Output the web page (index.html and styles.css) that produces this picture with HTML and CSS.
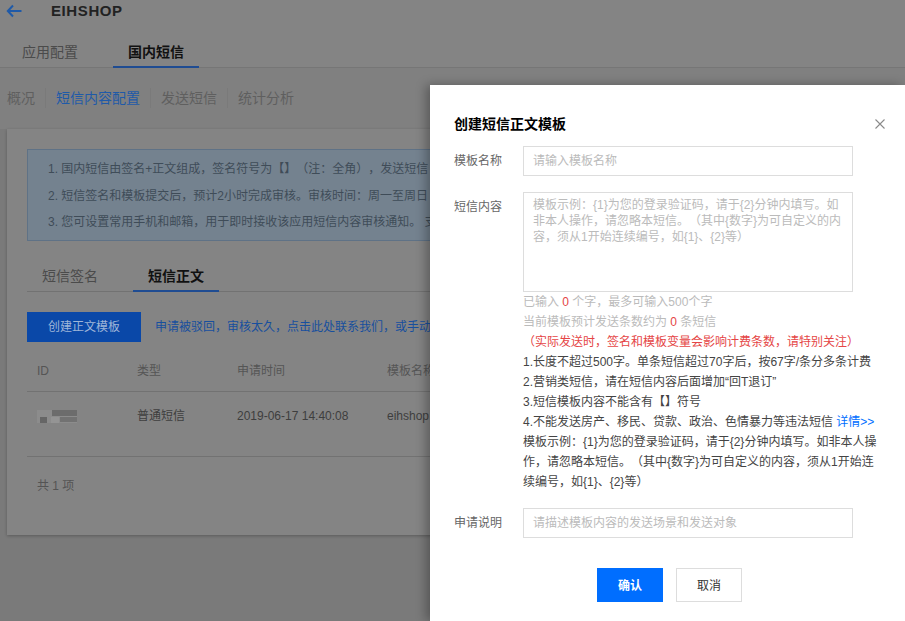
FILE: index.html
```html
<!DOCTYPE html>
<html lang="zh-CN">
<head>
<meta charset="utf-8">
<title>创建短信正文模板</title>
<link rel="stylesheet" href="styles.css">
</head>
<body>
<div class="page">
  <header class="top">
    <svg class="back" width="16" height="14" viewBox="0 0 16 14"><path d="M7 1.500 1.800 7 7 12.500M2 7h13.500" fill="none" stroke="#1f5aa8" stroke-width="2"/></svg>
    <span class="app">EIHSHOP</span>
  </header>
  <nav class="tabs main-tabs">
    <span class="tab">应用配置</span>
    <span class="tab on">国内短信</span>
  </nav>
  <nav class="sub">
    <span class="sub-item first">概况</span>
    <span class="sub-item active">短信内容配置</span>
    <span class="sub-item">发送短信</span>
    <span class="sub-item">统计分析</span>
  </nav>
  <section class="card">
    <div class="notice">
      <p>1. 国内短信由签名+正文组成，签名符号为【】（注：全角），发送短信</p>
      <p>2. 短信签名和模板提交后，预计2小时完成审核。审核时间：周一至周日</p>
      <p>3. 您可设置常用手机和邮箱，用于即时接收该应用短信内容审核通知。 支</p>
    </div>
    <nav class="tabs inner-tabs">
      <span class="tab">短信签名</span>
      <span class="tab on">短信正文</span>
    </nav>
    <div class="tools">
      <span class="create">创建正文模板</span>
      <span class="apply">申请被驳回，审核太久，点击此处联系我们，或手动</span>
    </div>
    <div class="table">
      <div class="row head"><span>ID</span><span>类型</span><span>申请时间</span><span>模板名称</span></div>
      <div class="row body"><span class="mask"></span><span>普通短信</span><span>2019-06-17 14:40:08</span><span>eihshop</span></div>
    </div>
    <div class="total">共 1 项</div>
  </section>
</div>
<aside class="modal">
  <div class="modal-head">
    <h2>创建短信正文模板</h2>
    <svg class="close" width="10" height="10" viewBox="0 0 10 10"><path d="M.5.5l9 9M9.500.5l-9 9" fill="none" stroke="#8a8a8a" stroke-width="1.1"/></svg>
  </div>
  <div class="form">
    <label class="lab">模板名称</label>
    <div class="field ph">请输入模板名称</div>
    <label class="lab">短信内容</label>
    <div class="content">
      <div class="field area ph">模板示例：{1}为您的登录验证码，请于{2}分钟内填写。如非本人操作，请忽略本短信。（其中{数字}为可自定义的内容，须从1开始连续编号，如{1}、{2}等）</div>
      <div class="help">
        <p class="mute">已输入 <b>0</b> 个字，最多可输入500个字</p>
        <p class="mute">当前模板预计发送条数约为 <b>0</b> 条短信</p>
        <p class="warn">（实际发送时，签名和模板变量会影响计费条数，请特别关注）</p>
        <p>1.长度不超过500字。单条短信超过70字后，按67字/条分多条计费</p>
        <p>2.营销类短信，请在短信内容后面增加“回T退订”</p>
        <p>3.短信模板内容不能含有【】符号</p>
        <p>4.不能发送房产、移民、贷款、政治、色情暴力等违法短信 <a>详情&gt;&gt;</a></p>
        <p>模板示例：{1}为您的登录验证码，请于{2}分钟内填写。如非本人操作，请忽略本短信。（其中{数字}为可自定义的内容，须从1开始连续编号，如{1}、{2}等）</p>
      </div>
    </div>
    <label class="lab">申请说明</label>
    <div class="field ph">请描述模板内容的发送场景和发送对象</div>
  </div>
  <div class="actions">
    <span class="btn ok">确认</span>
    <span class="btn no">取消</span>
  </div>
</aside>
</body>
</html>
```
FILE: styles.css
```css
* { box-sizing: border-box; }
html, body { margin: 0; height: 100%; }
body {
  width: 905px;
  height: 621px;
  overflow: hidden;
  position: relative;
  font: 12px/20px "Liberation Sans", "Noto Sans CJK SC", sans-serif;
  text-spacing-trim: space-all;
  background: #7a7a7a;
  color: #4a4a4a;
}
p { margin: 0; }
.page { height: 621px; overflow: hidden; }
.top { height: 22px; display: flex; align-items: center; padding-left: 6px; background: #848484; }
.back { display: block; }
.app { margin-left: 29px; font-size: 15px; font-weight: 700; letter-spacing: .6px; color: #222; }
.tabs { display: flex; gap: 20px; border-bottom: 1px solid #777; }
.tab { padding: 0 15px; height: 34px; line-height: 36px; font-size: 14px; color: #4b4b4b; border-bottom: 2px solid transparent; margin-bottom: -1px; }
.tab.on { color: #111; font-weight: 700; border-bottom-color: #1f4c92; }
.main-tabs { height: 46px; padding: 12px 0 0 7px; background: #848484; border-bottom-color: #767676; }
.sub { display: flex; align-items: flex-start; padding: 20px 0 0 7px; height: 61px; background: #808080; }
.sub-item { font-size: 14px; color: #5f5f5f; padding: 0 10px; border-left: 1px solid #7a7a7a; line-height: 20px; }
.sub-item.first { padding-left: 0; border-left: 0; }
.sub-item.active { color: #1f5aa8; }
.card { margin: 0 0 0 7px; padding: 20px; height: 406px; width: 900px; background: #848484; box-shadow: 0 1px 3px rgba(0,0,0,.25); overflow: hidden; white-space: nowrap; }
.notice { height: 92px; padding: 6px 20px; background: #74828f; border: 1px solid #5f7286; color: #3f4c58; line-height: 26.5px; }
.inner-tabs { height: 39px; margin-top: 12px; border-bottom-color: #727272; }
.inner-tabs .tab { height: 39px; line-height: 46px; }
.tools { display: flex; align-items: center; gap: 14px; margin-top: 20px; height: 30px; }
.create { width: 114px; height: 30px; line-height: 30px; text-align: center; background: #0a48a8; color: #9fb6d8; }
.apply { color: #174f9e; }
.row { display: grid; grid-template-columns: 100px 100px 150px 1fr; padding-left: 10px; border-bottom: 1px solid #727272; align-items: center; }
.head { height: 50px; padding-top: 8px; color: #555; }
.body { height: 65px; padding-bottom: 16px; color: #3e3e3e; }
.mask {
  width: 40px;
  height: 13px;
  background:
    linear-gradient(#666 0 0) 3px 7px / 7px 6px no-repeat,
    linear-gradient(#6c6c6c 0 0) 15px 0 / 25px 6px no-repeat,
    linear-gradient(#727272 0 0) 23px 7px / 17px 5px no-repeat,
    linear-gradient(#949494 0 0) 14px 7px / 8px 6px no-repeat,
    #8c8c8c;
}
.total { margin: 19px 0 0 10px; color: #545454; }
.modal { position: absolute; left: 430px; top: 85px; width: 475px; height: 536px; background: #fff; padding: 0 24px; box-shadow: -4px 0 10px rgba(0,0,0,.3); color: #444; }
.modal-head { height: 61px; display: flex; justify-content: space-between; align-items: center; padding-top: 16px; }
.modal h2 { margin: 0; font-size: 14px; font-weight: 700; color: #000; }
.close { margin-right: -4px; }
.form { display: grid; grid-template-columns: 69px 354px; row-gap: 16px; }
.lab { line-height: 30px; color: #666; }
.field { width: 330px; height: 30px; border: 1px solid #ddd; padding: 4px 9px; line-height: 20px; }
.field.area { height: 100px; line-height: 16px; }
.ph { color: #bbb; }
.mute { color: #bbb; }
.mute b { color: #e54545; font-weight: 400; }
.warn { color: #e54545; }
.help a { color: #006eff; }
.actions { display: flex; justify-content: center; gap: 13px; margin-top: 30px; padding-left: 4px; }
.btn { width: 66px; height: 34px; line-height: 34px; text-align: center; border: 1px solid #ddd; background: #fff; color: #333; }
.ok { background: #006eff; border-color: #006eff; color: #fff; font-weight: 700; }
```
